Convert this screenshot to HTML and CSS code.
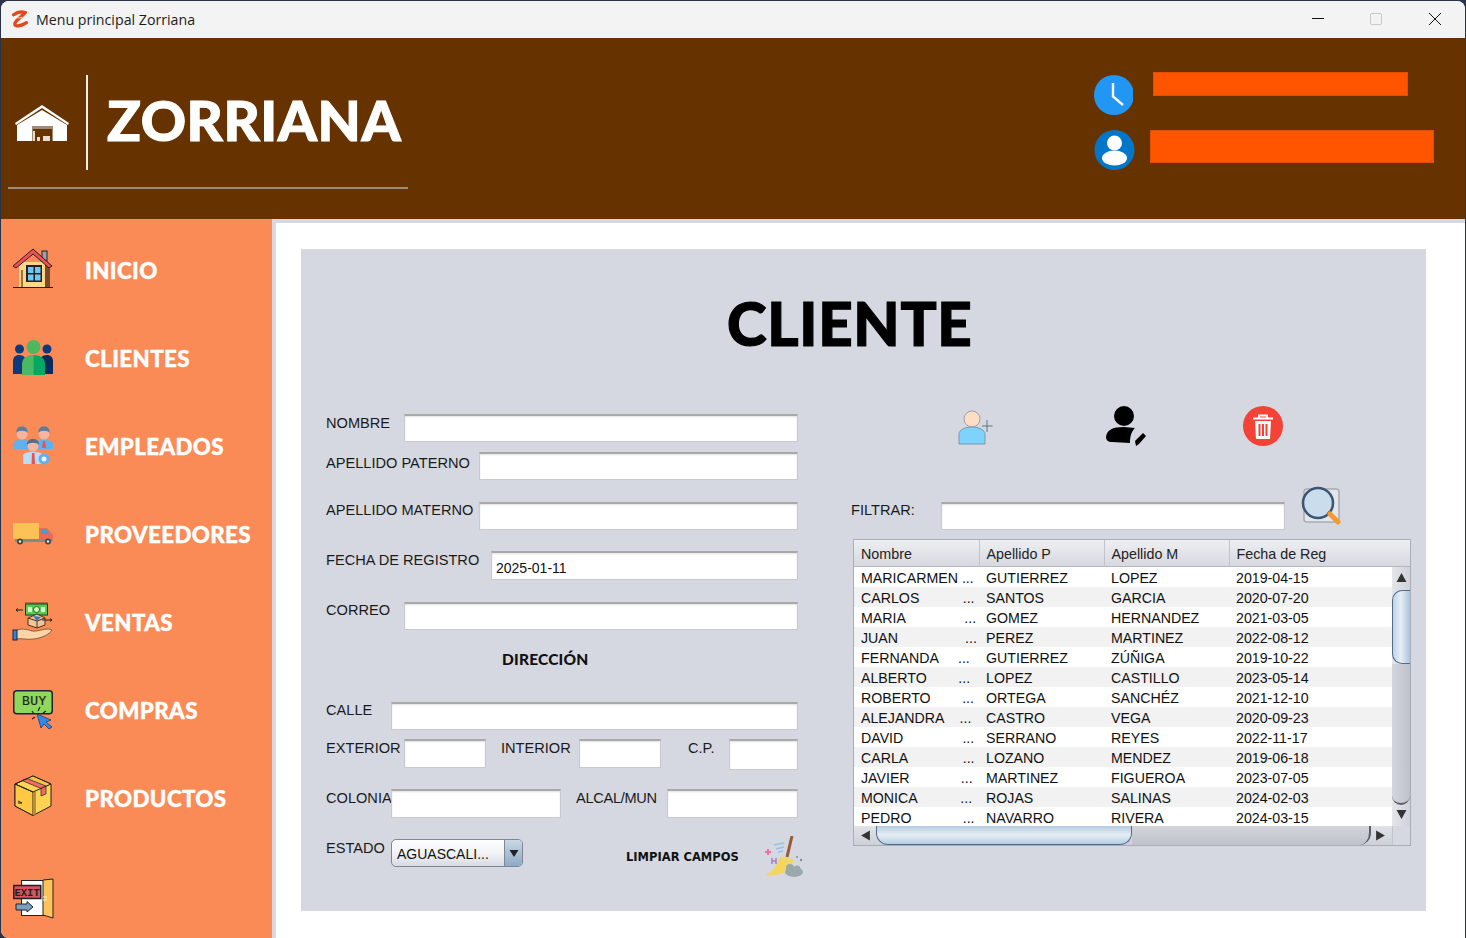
FILE: index.html
```html
<!DOCTYPE html>
<html lang="es">
<head>
<meta charset="utf-8">
<title>Menu principal Zorriana</title>
<link rel="stylesheet" href="styles.css">
</head>
<body>
<div class="window">
  <div class="titlebar">
    <svg class="app-icon" viewBox="0 0 16 18"><path d="M2.500 4.500C6 1.800 10 1.500 13.500 2.500L5 10.500C3 12.500 3 14.500 5.500 15C8.500 15.500 11.500 14 14.500 12" fill="none" stroke="#e2491c" stroke-width="3.200" stroke-linecap="round" stroke-linejoin="round"/><path d="M6 7.500L11 7" stroke="#f7b27f" stroke-width="1.200"/></svg>
    <span class="title-text">Menu principal Zorriana</span>
    <div class="controls">
      <svg class="ctl" viewBox="0 0 14 14"><path d="M0 6.500H12" stroke="#111" stroke-width="1"/></svg>
      <svg class="ctl" viewBox="0 0 14 14"><rect x=".5" y="1.500" width="11" height="11" rx="1.500" fill="none" stroke="#c8c8c8"/></svg>
      <svg class="ctl" viewBox="0 0 14 14"><path d="M1 1L13 13M13 1L1 13" stroke="#111" stroke-width="1"/></svg>
    </div>
  </div>

  <header class="header">
    <div class="brand">
      <div class="brand-top">
        <svg class="warehouse" viewBox="0 0 54 36"><path d="M0 18L27 0L54 18L53 20L27 3L1 20Z" fill="#fff"/><path d="M2 20L27 5L52 20V36H38V22H17V36H2Z" fill="#fff"/><path d="M17 21H38V36H17Z" fill="#a08a73"/><path d="M18 24H37V36H18Z" fill="#663300"/><path d="M18 26H20V36H18ZM22 32H25V36H22ZM28 31H35V36H28Z" fill="#e8dccb"/></svg>
        <div class="brand-line"></div>
        <div class="brand-name">ZORRIANA</div>
      </div>
      <div class="brand-rule"></div>
    </div>
    <div class="status">
      <div class="status-row first">
        <svg class="clock" viewBox="0 0 39 40"><circle cx="20" cy="20" r="20" fill="#2196f3"/><path d="M19 8V21.500L29 30" fill="none" stroke="#fff" stroke-width="2.400"/></svg>
        <div class="bar bar-time"></div>
      </div>
      <div class="status-row">
        <svg class="person" viewBox="0 0 41 40"><circle cx="20.500" cy="20" r="20" fill="#0277c9"/><circle cx="20.500" cy="13" r="7.500" fill="#fff"/><ellipse cx="20.500" cy="28" rx="12.500" ry="7.500" fill="#fff"/></svg>
        <div class="bar bar-user"></div>
      </div>
    </div>
  </header>

  <div class="main">
    <nav class="sidebar">
      <a class="nav-item">
        <svg class="nav-icon" viewBox="0 0 40 40"><rect x="29" y="1" width="5" height="10" fill="#9aa3a8" stroke="#222"/><rect x="6" y="12" width="28" height="25" fill="#ffd68a"/><rect x="32" y="14" width="5" height="23" fill="#7b4a2a"/><path d="M0 16L20 -1L39 16L36 18L20 4L3 18Z" fill="#ef4f55" stroke="#222"/><path d="M8 20H10V37H8Z" fill="#a9713f"/><rect x="13" y="15" width="16" height="17" fill="#222"/><rect x="15" y="17" width="5.500" height="6" fill="#6cc8f7"/><rect x="22" y="17" width="5.500" height="6" fill="#6cc8f7"/><rect x="15" y="24.500" width="5.500" height="6" fill="#6cc8f7"/><rect x="22" y="24.500" width="5.500" height="6" fill="#6cc8f7"/><path d="M0 37.500H40" stroke="#222"/></svg>
        <span>INICIO</span>
      </a>
      <a class="nav-item">
        <svg class="nav-icon" viewBox="0 0 40 40"><circle cx="6.500" cy="11" r="4.500" fill="#0d3a7d"/><circle cx="34" cy="11" r="4.500" fill="#0d3a7d"/><path d="M0 36V23C0 19 3 17 6 17S11 18 12 20V36Z" fill="#0d3a7d"/><path d="M40 36V23C40 19 37 17 34 17S29 18 28 20V36Z" fill="#0a2a5e"/><circle cx="20.500" cy="9" r="7" fill="#4cb860"/><path d="M9 37V26C9 20 14 17 20.500 17V37Z" fill="#4cb860"/><path d="M20.500 37V17C27 17 32 20 32 26V37Z" fill="#00a862"/></svg>
        <span>CLIENTES</span>
      </a>
      <a class="nav-item">
        <svg class="nav-icon" viewBox="0 0 40 40"><circle cx="9" cy="8" r="5.500" fill="#f7b5a0"/><path d="M3.500 7C3 2 6 0.500 9 0.500S15 2 14.500 7C13 4 5 4 3.500 7Z" fill="#5a7f9e"/><path d="M0 23V18C0 15 4 14 9 14S18 15 18 18V23Z" fill="#5fb0ee"/><circle cx="31" cy="8" r="5.500" fill="#f7b5a0"/><path d="M25.500 7C25 2 28 0.500 31 0.500S37 2 36.500 7C35 4 27 4 25.500 7Z" fill="#5a7f9e"/><path d="M22 23V18C22 15 26 14 31 14S40 15 40 18V23Z" fill="#5fb0ee"/><path d="M30 15H32L33 22H29Z" fill="#e2555a"/><circle cx="20" cy="20" r="5.500" fill="#f7b5a0"/><path d="M14 19C14 14 17 13 20 13S26 14 26 19C24 16 16 16 14 19Z" fill="#4f6f8c"/><path d="M10 38V30C10 27 14 26 20 26S30 27 30 30V38Z" fill="#bcdcf5"/><path d="M19 27H21.500L22 38H18.500Z" fill="#e2555a"/><circle cx="31" cy="33" r="5.500" fill="#5fb0ee"/><circle cx="31" cy="33" r="2.500" fill="#e6f3fd"/></svg>
        <span>EMPLEADOS</span>
      </a>
      <a class="nav-item">
        <svg class="nav-icon" viewBox="0 0 40 40"><rect x="0" y="9" width="26" height="16" fill="#fcc255"/><path d="M26 14H34L40 21V27H26Z" fill="#ee6a58"/><path d="M28 15H33L36 20H28Z" fill="#3f9ee0"/><rect x="2" y="25" width="37" height="3" fill="#7c8c92"/><circle cx="7" cy="27.500" r="3" fill="#3c4a56"/><circle cx="7" cy="27.500" r="1.200" fill="#e8e8e8"/><circle cx="35" cy="27.500" r="3" fill="#3c4a56"/><circle cx="35" cy="27.500" r="1.200" fill="#e8e8e8"/></svg>
        <span>PROVEEDORES</span>
      </a>
      <a class="nav-item">
        <svg class="nav-icon" viewBox="0 0 40 40"><rect x="12" y="0" width="23" height="2" fill="#b86c45"/><rect x="12.500" y="2" width="22" height="11" fill="#4fd04f" stroke="#1a3a1a"/><circle cx="23.500" cy="7.500" r="3" fill="#d9f7c9" stroke="#1a3a1a" stroke-width=".8"/><path d="M15 5H19V10H15ZM28 5H32V10H28Z" fill="#d9f7c9"/><path d="M15 16L24 12L32 16V23L24 26L15 23Z" fill="#f4c590" stroke="#4a3020"/><path d="M15 16L24 19L32 16M24 19V26" fill="none" stroke="#4a3020"/><path d="M20 14L28 15L24 19Z" fill="#3078c8"/><path d="M3 8H10M3 8L5 6.500M3 8L5 9.500M29 18H39M39 18L37 16.500M39 18L37 19.500" fill="none" stroke="#222"/><path d="M2 29C7 26 14 27 19 29C25 30 34 25 39 28C37 32 29 36 21 37C14 38 8 36 2 37Z" fill="#fbd5a5" stroke="#6a4a38" stroke-width=".8"/><rect x="0" y="28" width="4" height="10" fill="#2f86e0" stroke="#223"/></svg>
        <span>VENTAS</span>
      </a>
      <a class="nav-item">
        <svg class="nav-icon" viewBox="0 0 40 40"><rect x=".75" y=".75" width="38.500" height="23" rx="3" fill="#8ed85b" stroke="#223" stroke-width="1.500"/><text class="buy" x="9" y="15">BUY</text><path d="M24 24L38 30L33 32L39 37L36 39L31 34L28 38Z" fill="#2e8bee" stroke="#1c3c6a" stroke-width=".8"/><path d="M19 21L21 24M27 17L25 21M33 21L30 23M19 29L22 27" stroke="#222" stroke-width="1.200"/></svg>
        <span>COMPRAS</span>
      </a>
      <a class="nav-item">
        <svg class="nav-icon" viewBox="0 0 40 40"><path d="M20 -2L38 6V28L20 37.500L2 28V6Z" fill="#ffd454" stroke="#222"/><path d="M2 6L20 14V37.500L2 28Z" fill="#ffc944" stroke="#222"/><path d="M20 14H23V36L20 37.500Z" fill="#c08b32"/><path d="M10 2L29 10.500L38 6.500L20 -2Z" fill="#f7c44a"/><path d="M9 2.500L14 .5L33 8V16L28 18V10.500Z" fill="#ee6d60" stroke="#222" stroke-width=".7"/><path d="M20 -2L38 6L20 14L2 6Z" fill="none" stroke="#222"/><path d="M5 25H9M5 23L9 25" stroke="#222"/></svg>
        <span>PRODUCTOS</span>
      </a>
      <a class="nav-exit">
        <svg class="nav-icon" viewBox="0 0 40 40"><rect x="8.500" y="1.500" width="22" height="35" fill="#fff" stroke="#222"/><path d="M30 1L40 0V39L30 36Z" fill="#ffc35a" stroke="#222"/><path d="M30 18H34M30 21H34" stroke="#fff3cc"/><rect x=".75" y="6.500" width="27" height="13" fill="#d9525c" stroke="#222" stroke-width="1.500"/><text class="exit" x="1.500" y="17">EXIT</text><path d="M3 25H14V22.500L20 28L14 33V31H3Z" fill="#7ba0c2" stroke="#222"/></svg>
      </a>
    </nav>

    <div class="content">
      <section class="panel">
        <h1 class="panel-title">CLIENTE</h1>
        <div class="columns">
          <form class="form">
            <div class="row"><label class="lab w78">NOMBRE</label><input class="field"></div>
            <div class="row"><label class="lab w153 down2">APELLIDO PATERNO</label><input class="field"></div>
            <div class="row"><label class="lab w153 up1">APELLIDO MATERNO</label><input class="field"></div>
            <div class="row"><label class="lab w165">FECHA DE REGISTRO</label><input class="field tall" value="2025-01-11"></div>
            <div class="row"><label class="lab w78 up1">CORREO</label><input class="field"></div>
            <div class="row"><div class="sub-title">DIRECCIÓN</div></div>
            <div class="row"><label class="lab w65 up1">CALLE</label><input class="field"></div>
            <div class="row">
              <label class="lab w78">EXTERIOR</label><input class="field w82 tall">
              <label class="lab w78 ml15">INTERIOR</label><input class="field w82 tall">
              <label class="lab w41 ml27">C.P.</label><input class="field taller">
            </div>
            <div class="row">
              <label class="lab w65">COLONIA</label><input class="field w170 tall">
              <label class="lab w91 ml15 tight">ALCAL/MUN</label><input class="field tall">
            </div>
            <div class="row">
              <label class="lab w65">ESTADO</label>
              <div class="combo"><span class="combo-text">AGUASCALI...</span><span class="combo-btn"><svg class="combo-arrow" viewBox="0 0 10 10"><path d="M0.500 2H9.500L5 9Z" fill="#222"/></svg></span></div>
              <div class="clear-text">LIMPIAR CAMPOS</div>
              <svg class="broom" viewBox="0 0 38 41"><path d="M27 0L22 21" stroke="#9b5a34" stroke-width="3"/><path d="M15 21L28 23L27 31C20 38 8 41 0 39C7 36 12 30 15 21Z" fill="#f3d660"/><path d="M9 9L19 7M11 13L19 11M13 16L18 15" stroke="#8fc5e8" stroke-width="1.300"/><path d="M0 16H6M3 13V19" stroke="#f06f9e" stroke-width="2"/><path d="M7 22V28M11 22V28M7 25H11" stroke="#a77cc9" stroke-width="1.500"/><ellipse cx="29" cy="36" rx="9" ry="5" fill="#9aa9ab"/><circle cx="25" cy="32" r="4" fill="#9aa9ab"/><circle cx="32" cy="33" r="3.500" fill="#9aa9ab"/><circle cx="32" cy="21" r="1" fill="#8d8d8d"/><circle cx="36" cy="24" r="1.200" fill="#8d8d8d"/></svg>
            </div>
          </form>

          <div class="side">
            <div class="actions">
              <svg class="act-add" viewBox="0 0 35 36"><circle cx="14" cy="10" r="8" fill="#ffdcc4" stroke="#9aa0a8"/><path d="M1 35V25C1 21 7 18 14 18S27 21 27 25V35Z" fill="#7dd3fc" stroke="#7e98ac"/><path d="M24 17H34.500M29 11V23" stroke="#5c7488" stroke-width="1"/></svg>
              <svg class="act-edit" viewBox="0 0 40 40"><circle cx="18" cy="10" r="10" fill="#000"/><path d="M0 31C1 24 6 21 18 21L29 22C25 26 24 31 24 37L6 36C2 36 0 34 0 31Z" fill="#000"/><path d="M30 40L29 35L37 27L40 30L33 38Z" fill="#000"/></svg>
              <svg class="act-del" viewBox="0 0 40 40"><circle cx="20" cy="20" r="20" fill="#f44336"/><path d="M10 12.500H30M16 12V9.500H24V12" fill="none" stroke="#fff" stroke-width="2"/><path d="M12 15H28L27 33H13Z" fill="#fff"/><path d="M16.500 18V30M20 18V30M23.500 18V30" stroke="#f44336" stroke-width="2"/></svg>
            </div>
            <div class="filter">
              <label class="lab w90">FILTRAR:</label>
              <input class="field filter-input">
              <svg class="search" viewBox="0 0 40 40"><rect x="3" y="3" width="35" height="33" rx="3" fill="#e4e7ea" stroke="#a8abb0" stroke-width="1.500"/><circle cx="17" cy="17" r="15" fill="#c9dded" stroke="#3d5570" stroke-width="2.500"/><path d="M27 28L29 26" stroke="#3d5570" stroke-width="3"/><path d="M29 28L37 36" stroke="#f59a30" stroke-width="5" stroke-linecap="round"/></svg>
            </div>
            <div class="grid">
              <table class="thead">
                <tr><th>Nombre</th><th>Apellido P</th><th>Apellido M</th><th>Fecha de Reg</th></tr>
              </table>
              <div class="grid-mid">
                <div class="rows">
                  <table class="tbody">
                    <tr><td>MARICARMEN ...</td><td>GUTIERREZ</td><td>LOPEZ</td><td>2019-04-15</td></tr>
                    <tr><td>CARLOS           ...</td><td>SANTOS</td><td>GARCIA</td><td>2020-07-20</td></tr>
                    <tr><td>MARIA               ...</td><td>GOMEZ</td><td>HERNANDEZ</td><td>2021-03-05</td></tr>
                    <tr><td>JUAN                 ...</td><td>PEREZ</td><td>MARTINEZ</td><td>2022-08-12</td></tr>
                    <tr><td>FERNANDA     ...</td><td>GUTIERREZ</td><td>ZÚÑIGA</td><td>2019-10-22</td></tr>
                    <tr><td>ALBERTO        ...</td><td>LOPEZ</td><td>CASTILLO</td><td>2023-05-14</td></tr>
                    <tr><td>ROBERTO        ...</td><td>ORTEGA</td><td>SANCHÉZ</td><td>2021-12-10</td></tr>
                    <tr><td>ALEJANDRA    ...</td><td>CASTRO</td><td>VEGA</td><td>2020-09-23</td></tr>
                    <tr><td>DAVID               ...</td><td>SERRANO</td><td>REYES</td><td>2022-11-17</td></tr>
                    <tr><td>CARLA              ...</td><td>LOZANO</td><td>MENDEZ</td><td>2019-06-18</td></tr>
                    <tr><td>JAVIER             ...</td><td>MARTINEZ</td><td>FIGUEROA</td><td>2023-07-05</td></tr>
                    <tr><td>MONICA           ...</td><td>ROJAS</td><td>SALINAS</td><td>2024-02-03</td></tr>
                    <tr><td>PEDRO             ...</td><td>NAVARRO</td><td>RIVERA</td><td>2024-03-15</td></tr>
                  </table>
                </div>
                <div class="vbar">
                  <svg class="sb-arrow up" viewBox="0 0 10 10"><path d="M0.500 9H9.500L5 1Z" fill="#333"/></svg>
                  <div class="vthumb"></div>
                  <div class="vtrack"></div>
                  <svg class="sb-arrow" viewBox="0 0 10 10"><path d="M0.500 1H9.500L5 9Z" fill="#333"/></svg>
                </div>
              </div>
              <div class="hbar">
                <svg class="sb-arrow" viewBox="0 0 10 10"><path d="M9 0.500V9.500L1 5Z" fill="#333"/></svg>
                <div class="hthumb"></div>
                <div class="htrack"></div>
                <svg class="sb-arrow" viewBox="0 0 10 10"><path d="M1 0.500V9.500L9 5Z" fill="#333"/></svg>
                <div class="corner"></div>
              </div>
            </div>
          </div>
        </div>
      </section>
    </div>
  </div>
</div>
</body>
</html>
```

FILE: styles.css
```css
* { box-sizing: border-box; }
html, body { margin: 0; height: 100%; }
body { background: #2a3448; overflow: hidden; font-family: "Liberation Sans", Arial, sans-serif; color: #1a1a1a; }

.window {
  width: 1464px; height: 937px; margin: 1px 0 0 1px;
  display: flex; flex-direction: column;
  overflow: hidden; border-radius: 8px 8px 0 8px; background: #fff;
}

.titlebar { flex: 0 0 37px; display: flex; align-items: center; background: #f3f3f3; padding-left: 10px; }
.app-icon { width: 17px; height: 19px; margin-top: 0; }
.title-text { margin-left: 8px; font: 14.200px "Open Sans", "Noto Sans", sans-serif; color: #1c1c1c; }
.controls { margin-left: auto; display: flex; gap: 44px; padding-right: 23px; margin-bottom: 1px; }
.ctl { width: 14px; height: 14px; display: block; }

.header { flex: 0 0 181px; display: flex; background: #663300; }
.brand { width: 400px; margin-left: 7px; padding-top: 37px; }
.brand-top { display: flex; align-items: center; height: 95px; padding-left: 7px; }
.warehouse { width: 54px; height: 36px; }
.brand-line { width: 2px; height: 95px; margin-left: 17px; background: #f4eee8; }
.brand-name { margin: -6px 0 0 19px; font: 900 56px/1 Lato, sans-serif; color: #fff; letter-spacing: 0.5px; -webkit-text-stroke: 1px #fff; }
.brand-rule { height: 2px; margin-top: 17px; background: #9d8a79; }

.status { margin-left: auto; margin-right: 31px; width: 340px; padding-top: 34px; }
.status-row { display: flex; align-items: flex-start; }
.status-row.first { height: 58px; }
.clock { width: 39px; height: 40px; margin-top: 3px; }
.person { width: 41px; height: 40px; }
.bar { background: #ff5500; border: 1px solid #e04f05; }
.bar-time { width: 255px; height: 24px; margin-left: 20px; }
.bar-user { width: 284px; height: 33px; margin-left: 15px; }

.main { flex: 1; display: flex; min-height: 0; }
.sidebar { flex: 0 0 271px; background: #fa8b56; padding: 7px 0 0 12px; display: flex; flex-direction: column; }
.nav-item { flex: 0 0 88px; display: flex; align-items: center; gap: 32px; font: 900 22.300px/1 Lato, sans-serif; color: #fff; letter-spacing: 0.4px; -webkit-text-stroke: 0.4px #fff; }
.nav-item span { padding-top: 2px; }
.nav-exit { margin-top: 37px; display: block; }
.nav-icon { width: 40px; height: 40px; display: block; overflow: visible; flex: none; }
.buy { font: 400 13px "Liberation Mono", monospace; fill: #222; stroke: #222; stroke-width: 0.2px; }
.exit { font: 700 10.500px "Liberation Mono", monospace; fill: #222; }

.content { flex: 1; background: #fff; border-top: 4px solid #d6d9e1; border-left: 4px solid #d6d9e1; padding: 26px 0 0 25px; }
.panel { width: 1125px; height: 662px; background: #d5d8e0; padding: 0 15px 0 25px; }
.panel-title { margin: 0; padding: 38px 0 0 401px; height: 157px; font: 900 60px/1.2 Lato, sans-serif; color: #000; letter-spacing: 0.7px; -webkit-text-stroke: 1.200px #000; }

.columns { display: flex; gap: 53px; }
.form {
  width: 472px; margin-top: 8px; display: grid;
  grid-template-rows: 38px 50px 49px 51px 48px 52px 37px 50px 50px auto;
}
.row { display: flex; align-items: flex-start; min-width: 0; }
.lab { flex: none; font-size: 14.600px; line-height: 18px; color: #1a1a1a; white-space: nowrap; }
.w41 { width: 41px; } .w65 { width: 65px; } .w78 { width: 78px; } .w90 { width: 90px; } .w91 { width: 91px; }
.w153 { width: 153px; } .w165 { width: 165px; }
.ml15 { margin-left: 15px; } .ml27 { margin-left: 27px; }
.down2 { padding-top: 2px; }
.up1 { margin-top: -1px; }
.tight { letter-spacing: -0.3px; }

.field {
  flex: 1; min-width: 0; height: 28px; padding: 4px 4px 0;
  background: #fff; border: 1px solid #c8cad0; border-top: 2px solid #a9a9a9; border-radius: 0; outline: none;
  box-shadow: inset 0 1px 2px rgba(0, 0, 0, 0.12);
  font: 14px "Liberation Sans", Arial, sans-serif; color: #111;
}
.field.tall { height: 29px; }
.field.taller { height: 31px; }
.field.w82 { flex: 0 0 82px; }
.field.w170 { flex: 0 0 170px; }

.sub-title { margin: 0 0 0 176px; font: 900 15.500px/18px Lato, sans-serif; color: #111; letter-spacing: 0.2px; }

.combo { flex: 0 0 132px; height: 28px; display: flex; border: 1px solid #7f8794; border-radius: 5px; overflow: hidden; background: linear-gradient(#fdfdfe, #f2f3f6 50%, #d7dbe2); }
.combo-text { flex: 1; padding: 5px 0 0 5px; font-size: 14px; line-height: 18px; color: #111; }
.combo-btn { flex: 0 0 18px; display: flex; align-items: center; justify-content: center; border-left: 1px solid #7f8794; background: linear-gradient(#c9d8e6, #8eaac6); }
.combo-arrow { width: 10px; height: 10px; }
.clear-text { margin: 10px 0 0 103px; width: 113px; font: 700 11.500px/17px "DejaVu Sans", sans-serif; color: #111; white-space: nowrap; }
.broom { width: 38px; height: 41px; margin: -3px 0 0 26px; flex: none; }

.side { width: 560px; }
.actions { height: 80px; display: flex; align-items: flex-start; padding-left: 107px; }
.act-add { width: 35px; height: 36px; margin-top: 3px; }
.act-edit { width: 40px; height: 40px; margin-left: 113px; }
.act-del { width: 40px; height: 40px; margin-left: 97px; }

.filter { height: 53px; display: flex; align-items: flex-start; }
.filter .lab { margin-top: 15px; }
.filter-input { flex: 0 0 344px; margin-top: 16px; }
.search { width: 40px; height: 40px; margin-left: 16px; }

.grid { width: 558px; height: 307px; margin-left: 2px; border: 1px solid #a9adb8; background: #d9dbe1; }
.thead, .tbody { border-collapse: collapse; table-layout: fixed; width: 100%; }
.thead { height: 27px; background: linear-gradient(#eeeff2, #d6d8df); border-bottom: 1px solid #b3b6c0; width: 556px; }
.thead th { padding: 2px 0 0 7px; width: 125px; font-size: 14.300px; font-weight: 400; text-align: left; color: #222; border-right: 1px solid #c0c3cc; }
.thead th:last-child { width: auto; border-right: 0; }

.grid-mid { display: flex; height: 259px; }
.rows { flex: 0 0 538px; height: 259px; overflow: hidden; background: #fff; }
.tbody tr { height: 20px; }
.tbody tr:nth-child(even) { background: #f2f2f2; }
.tbody td { padding: 2px 0 0 7px; width: 125px; font-size: 14.200px; line-height: 18px; color: #111; white-space: pre; overflow: hidden; }
.tbody td:last-child { width: auto; }

.vbar { flex: 1; display: flex; flex-direction: column; align-items: center; background: linear-gradient(90deg, #e4e6ea, #cfd2d9); }
.sb-arrow { width: 11px; height: 11px; flex: none; }
.sb-arrow.up { margin-top: 5px; }
.vthumb { align-self: stretch; height: 74px; margin-top: 7px; border: 1px solid #4f6c8c; border-right: 0; border-radius: 10px 0 0 10px; background: linear-gradient(90deg, #c0d4e6, #e6eef5 45%, #a8c4dc); }
.vtrack { flex: 1; align-self: stretch; margin-bottom: 4px; border-bottom: 2px solid #5a5e68; border-radius: 0 0 12px 12px; background: linear-gradient(90deg, #d3d5dc, #bfc2ca); }
.vbar .sb-arrow:last-child { margin-bottom: 6px; }

.hbar { height: 19px; display: flex; align-items: center; padding-left: 6px; background: linear-gradient(#e1e3e8, #cdd0d8); }
.hthumb { align-self: stretch; width: 256px; margin-left: 5px; border: 1px solid #4f6c8c; border-top: 0; border-radius: 0 0 12px 12px; background: linear-gradient(#b5cbdf, #e6eef5 50%, #b6cde2); }
.htrack { flex: 1; align-self: stretch; margin-right: 4px; border-right: 2px solid #5a5e68; border-radius: 0 0 12px 0; background: linear-gradient(#d3d5dc, #bfc2ca); }
.corner { width: 18px; align-self: stretch; margin-left: 6px; background: #d5d8e0; border-left: 1px solid #c2c5cd; }
```
